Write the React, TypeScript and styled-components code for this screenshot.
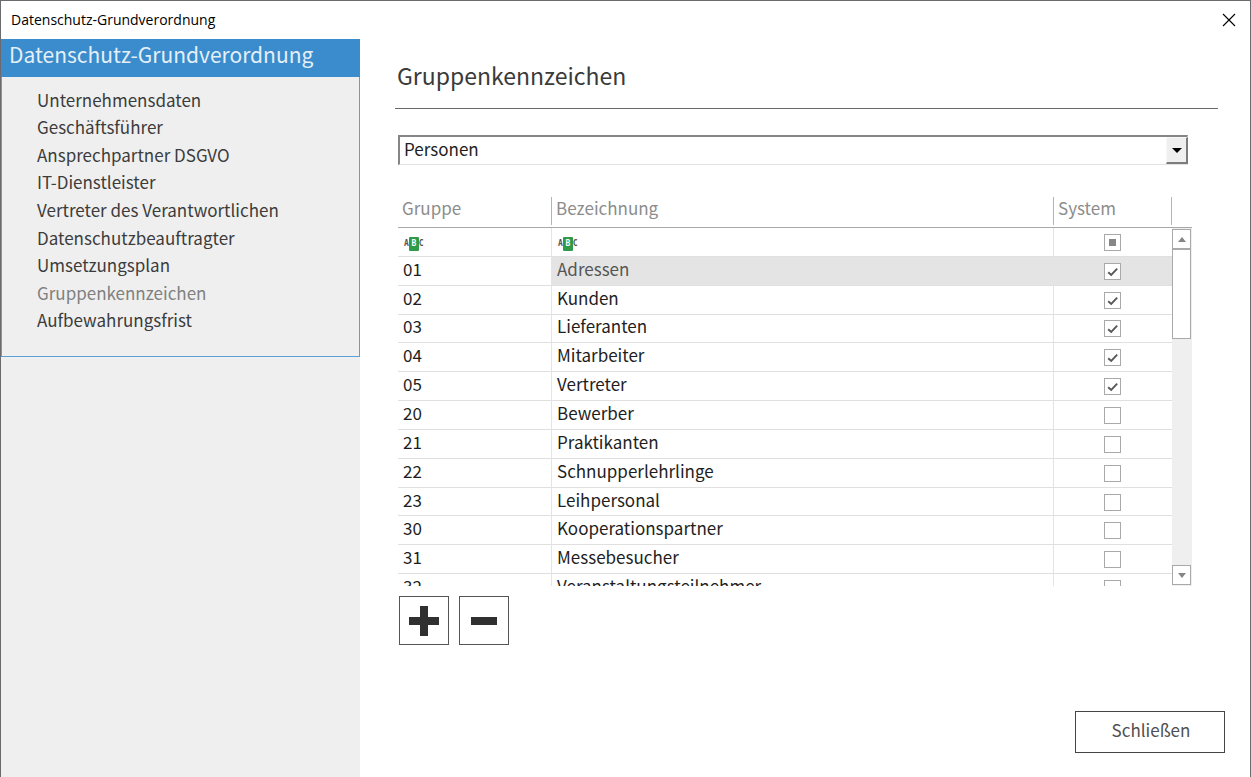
import React, { useEffect, useRef, useState } from 'react';
import styled, { createGlobalStyle, css } from 'styled-components';

const sans = '"Noto Sans CJK SC", "Noto Sans", sans-serif';

const GlobalStyle = createGlobalStyle`
  *, *::before, *::after { box-sizing: border-box; }
  body {
    margin: 0;
    background: #ffffff;
    font-family: ${sans};
    color: #1e1e1e;
  }
  button, select, input { font: inherit; color: inherit; margin: 0; }
`;

const Dialog = styled.div`
  display: flex;
  flex-direction: column;
  min-height: 100vh;
  border: 1px solid #6b6b6f;
  border-bottom: 0;
`;

const TitleBar = styled.header`
  display: flex;
  align-items: center;
  justify-content: space-between;
  height: 38px;
  padding: 0 10px;
  font: 14px/20px "Open Sans", "Noto Sans", sans-serif;
  color: #000000;
`;

const CloseIconButton = styled.button`
  display: grid;
  place-items: center;
  width: 22px;
  height: 22px;
  padding: 0;
  border: 0;
  background: none;
`;

const Body = styled.div`
  display: flex;
  flex: 1;
`;

const Sidebar = styled.aside`
  flex: none;
  width: 359px;
  background: #efefef;
`;

const NavPanel = styled.nav`
  border: 1px solid #5ba0d6;
  border-top: 0;
`;

const NavTitle = styled.h2`
  margin: 0 -1px;
  height: 38px;
  padding: 0 8px;
  background: #3a8ccc;
  color: #e4eff8;
  font-size: 21px;
  font-weight: 400;
  line-height: 30px;
`;

const NavList = styled.ul`
  display: grid;
  grid-auto-rows: 1fr;
  align-items: center;
  height: 248px;
  margin: 9px 0 22px;
  padding: 0 35px;
  list-style: none;
`;

const NavLink = styled.a<{ $current?: boolean }>`
  display: block;
  font-size: 17px;
  line-height: 24px;
  text-decoration: none;
  color: ${(p) => (p.$current ? '#808080' : '#3c3c3c')};
`;

const Main = styled.main`
  display: flex;
  flex: 1;
  flex-direction: column;
  min-width: 0;
  padding: 20px 25px 24px 35px;
`;

const Heading = styled.h1`
  margin: 0 7px 0 0;
  padding: 0 2px 17px;
  border-bottom: 1px solid #6a6a6a;
  font-size: 23px;
  font-weight: 400;
  line-height: 32px;
  color: #3a3a3a;
`;

const Content = styled.div`
  margin: 26px 33px 0 3px;
`;

const Combo = styled.div`
  position: relative;
  margin-right: 4px;
`;

const ComboSelect = styled.select`
  display: block;
  width: 100%;
  height: 30px;
  padding: 0 24px 4px 4px;
  border: 1px solid #e2e2e2;
  border-top: 2px solid #868686;
  border-left: 2px solid #868686;
  border-radius: 0;
  appearance: none;
  background: #ffffff;
  font-size: 17px;
  line-height: 24px;
`;

const ComboArrow = styled.span`
  position: absolute;
  top: 2px;
  right: 0;
  bottom: 1px;
  display: grid;
  place-items: center;
  width: 22px;
  border: 1px solid #f8f8f8;
  border-right: 2px solid #7c7c7c;
  border-bottom: 2px solid #7c7c7c;
  background: #efefef;
  pointer-events: none;
`;

const Grid = styled.div`
  display: flex;
  height: 391px;
  margin-top: 30px;
`;

const TableClip = styled.div`
  flex: 1;
  min-width: 0;
  overflow: hidden;
`;

const Table = styled.table`
  width: 100%;
  height: 408px;
  border-collapse: separate;
  border-spacing: 0;
  table-layout: fixed;
  font-size: 17px;
  line-height: 22px;
`;

const HeadCell = styled.th`
  height: 33px;
  padding: 2px 0 0;
  border-bottom: 1px solid #a8a8a8;
  font-weight: 400;
  text-align: left;
  vertical-align: top;
  color: #8c8c8c;
`;

const HeadLabel = styled.span`
  display: block;
  height: 28px;
  padding: 0 4px;
  border-right: 1px solid #b4b4b4;
  line-height: 22px;
`;

const Cell = styled.td<{ $shaded?: boolean; $centered?: boolean }>`
  padding: 0 5px 4px;
  border-right: 1px solid #e4e4e4;
  border-bottom: 1px solid #e0e0e0;
  white-space: nowrap;
  ${(p) =>
    p.$shaded &&
    css`
      background: #e4e4e4;
      color: #555555;
    `}
  ${(p) =>
    p.$centered &&
    css`
      padding: 0 2px 0 0;
      border-right: 0;
    `}
`;

const FilterBadge = styled.span`
  display: flex;
  align-items: flex-end;
  height: 22px;
  padding-left: 1px;
  font: bold 8px/14px "DejaVu Sans Mono", monospace;
  color: #555555;
`;

const FilterKey = styled.span`
  width: 10px;
  height: 14px;
  border-radius: 1px;
  background: #2f9a48;
  color: #ffffff;
  text-align: center;
`;

const CheckWrap = styled.span`
  display: grid;
  width: 17px;
  height: 17px;
  margin: 1px auto 0;

  > * { grid-area: 1 / 1; }
  > svg { pointer-events: none; }
`;

const CheckInput = styled.input`
  width: 17px;
  height: 17px;
  border: 1px solid #a9a9a9;
  appearance: none;
  background: #ffffff;
`;

const ScrollColumn = styled.div`
  display: flex;
  flex: none;
  flex-direction: column;
  width: 20px;
`;

const ScrollCorner = styled.div`
  height: 33px;
  border-bottom: 1px solid #a8a8a8;
`;

const ScrollTrack = styled.div`
  display: flex;
  flex: 1;
  flex-direction: column;
  padding: 1px 1px 1px 0;
  background: #efefef;
`;

const ScrollButton = styled.button`
  display: grid;
  place-items: center;
  height: 20px;
  padding: 0;
  border: 1px solid #a9a9a9;
  border-radius: 0;
  background: #ffffff;

  &:last-child { margin-top: auto; }
`;

const ScrollThumb = styled.div`
  height: 90px;
  border: 1px solid #a9a9a9;
  background: #ffffff;
`;

const Actions = styled.div`
  display: flex;
  gap: 10px;
  margin: 10px 1px 0;
`;

const SquareButton = styled.button`
  display: grid;
  place-items: center;
  width: 50px;
  height: 49px;
  padding: 0;
  border: 1px solid #555555;
  border-radius: 0;
  background: #ffffff;
`;

const CloseButton = styled.button`
  align-self: flex-end;
  width: 150px;
  height: 42px;
  margin-top: auto;
  padding: 0 0 5px 2px;
  border: 1px solid #444444;
  border-radius: 0;
  background: #ffffff;
  font-size: 17px;
  line-height: 24px;
  color: #505050;
`;

const navItems = [
  'Unternehmensdaten',
  'Geschäftsführer',
  'Ansprechpartner DSGVO',
  'IT-Dienstleister',
  'Vertreter des Verantwortlichen',
  'Datenschutzbeauftragter',
  'Umsetzungsplan',
  'Gruppenkennzeichen',
  'Aufbewahrungsfrist',
];

const initialRows = [
  { id: '01', name: 'Adressen', system: true },
  { id: '02', name: 'Kunden', system: true },
  { id: '03', name: 'Lieferanten', system: true },
  { id: '04', name: 'Mitarbeiter', system: true },
  { id: '05', name: 'Vertreter', system: true },
  { id: '20', name: 'Bewerber', system: false },
  { id: '21', name: 'Praktikanten', system: false },
  { id: '22', name: 'Schnupperlehrlinge', system: false },
  { id: '23', name: 'Leihpersonal', system: false },
  { id: '30', name: 'Kooperationspartner', system: false },
  { id: '31', name: 'Messebesucher', system: false },
  { id: '32', name: 'Veranstaltungsteilnehmer', system: false },
];

function Triangle({ up, color, width }: { up?: boolean; color: string; width: number }) {
  return (
    <svg width={width} height="5" viewBox="0 0 10 5" preserveAspectRatio="none" aria-hidden="true">
      <path d={up ? 'M0 5L5 0L10 5Z' : 'M0 0L5 5L10 0Z'} fill={color} />
    </svg>
  );
}

function FilterIcon() {
  return (
    <FilterBadge>
      A<FilterKey>B</FilterKey>C
    </FilterBadge>
  );
}

function SystemCheck({ label, checked, onChange }: { label: string; checked: boolean; onChange: () => void }) {
  return (
    <CheckWrap>
      <CheckInput type="checkbox" aria-label={label} checked={checked} onChange={onChange} />
      {checked && (
        <svg width="17" height="17" viewBox="0 0 17 17" aria-hidden="true">
          <path d="M4.2 9.2L7.2 12L13.2 5.6" fill="none" stroke="#585858" strokeWidth="1.9" />
        </svg>
      )}
    </CheckWrap>
  );
}

function MixedCheck() {
  const ref = useRef<HTMLInputElement>(null);
  useEffect(() => {
    if (ref.current) ref.current.indeterminate = true;
  }, []);
  return (
    <CheckWrap>
      <CheckInput ref={ref} type="checkbox" aria-label="System filtern" />
      <svg width="17" height="17" viewBox="0 0 17 17" aria-hidden="true">
        <rect x="5" y="5" width="7" height="7" fill="#868686" />
      </svg>
    </CheckWrap>
  );
}

export default function App() {
  const [rows, setRows] = useState(initialRows);
  const toggle = (id: string) =>
    setRows((list) => list.map((r) => (r.id === id ? { ...r, system: !r.system } : r)));

  return (
    <>
      <GlobalStyle />
      <Dialog>
        <TitleBar>
          <span>Datenschutz-Grundverordnung</span>
          <CloseIconButton type="button" aria-label="Fenster schließen">
            <svg width="14" height="14" viewBox="0 0 14 14" aria-hidden="true">
              <path d="M1 1L13 13M13 1L1 13" stroke="#000000" strokeWidth="1.1" />
            </svg>
          </CloseIconButton>
        </TitleBar>
        <Body>
          <Sidebar>
            <NavPanel>
              <NavTitle>Datenschutz-Grundverordnung</NavTitle>
              <NavList>
                {navItems.map((item) => (
                  <li key={item}>
                    <NavLink href="#" $current={item === 'Gruppenkennzeichen'}>
                      {item}
                    </NavLink>
                  </li>
                ))}
              </NavList>
            </NavPanel>
          </Sidebar>
          <Main>
            <Heading>Gruppenkennzeichen</Heading>
            <Content>
              <Combo>
                <ComboSelect aria-label="Bereich" defaultValue="Personen">
                  <option>Personen</option>
                </ComboSelect>
                <ComboArrow>
                  <Triangle color="#000000" width={10} />
                </ComboArrow>
              </Combo>
              <Grid>
                <TableClip>
                  <Table>
                    <colgroup>
                      <col style={{ width: 154 }} />
                      <col />
                      <col style={{ width: 118 }} />
                    </colgroup>
                    <thead>
                      <tr>
                        <HeadCell><HeadLabel>Gruppe</HeadLabel></HeadCell>
                        <HeadCell><HeadLabel>Bezeichnung</HeadLabel></HeadCell>
                        <HeadCell><HeadLabel>System</HeadLabel></HeadCell>
                      </tr>
                    </thead>
                    <tbody>
                      <tr>
                        <Cell><FilterIcon /></Cell>
                        <Cell><FilterIcon /></Cell>
                        <Cell $centered><MixedCheck /></Cell>
                      </tr>
                      {rows.map((row, i) => (
                        <tr key={row.id}>
                          <Cell>{row.id}</Cell>
                          <Cell $shaded={i === 0}>{row.name}</Cell>
                          <Cell $centered $shaded={i === 0}>
                            <SystemCheck
                              label={`System ${row.name}`}
                              checked={row.system}
                              onChange={() => toggle(row.id)}
                            />
                          </Cell>
                        </tr>
                      ))}
                    </tbody>
                  </Table>
                </TableClip>
                <ScrollColumn>
                  <ScrollCorner />
                  <ScrollTrack>
                    <ScrollButton type="button" aria-label="Nach oben">
                      <Triangle up color="#868686" width={8} />
                    </ScrollButton>
                    <ScrollThumb />
                    <ScrollButton type="button" aria-label="Nach unten">
                      <Triangle color="#868686" width={8} />
                    </ScrollButton>
                  </ScrollTrack>
                </ScrollColumn>
              </Grid>
              <Actions>
                <SquareButton type="button" aria-label="Hinzufügen">
                  <svg width="30" height="30" viewBox="0 0 30 30" aria-hidden="true">
                    <path d="M11 0H19V11H30V19H19V30H11V19H0V11H11Z" fill="#303030" />
                  </svg>
                </SquareButton>
                <SquareButton type="button" aria-label="Entfernen">
                  <svg width="26" height="8" viewBox="0 0 26 8" aria-hidden="true">
                    <rect width="26" height="8" fill="#303030" />
                  </svg>
                </SquareButton>
              </Actions>
            </Content>
            <CloseButton type="button">Schließen</CloseButton>
          </Main>
        </Body>
      </Dialog>
    </>
  );
}
